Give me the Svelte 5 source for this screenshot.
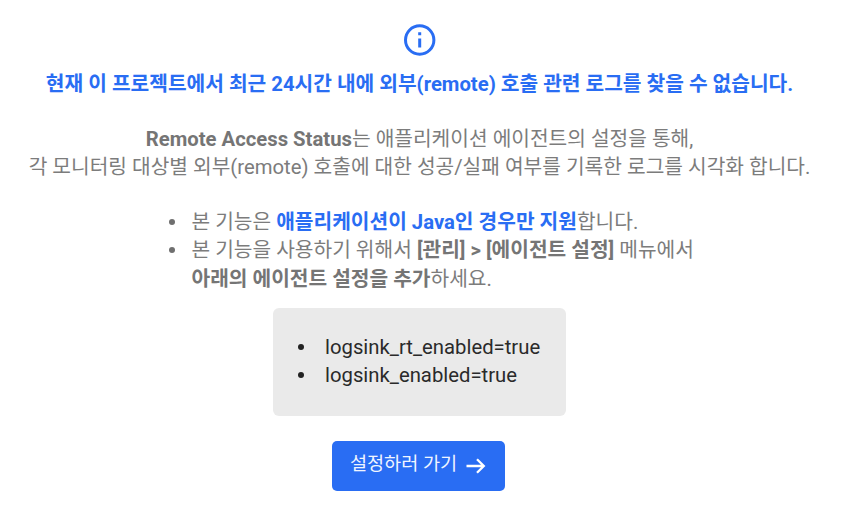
<script>
  const options = ['logsink_rt_enabled=true', 'logsink_enabled=true'];
</script>

<main class="notice">
  <svg class="info" viewBox="0 0 32 32" aria-hidden="true">
    <circle cx="15.7" cy="16" r="14.2" />
    <path d="M15.7 14.5v9M15.7 8.3v3" />
  </svg>

  <h1>현재 이 프로젝트에서 최근 24시간 내에 외부(remote) 호출 관련 로그를 찾을 수 없습니다.</h1>

  <p class="description">
    <span><b>Remote Access Status</b>는 애플리케이션 에이전트의 설정을 통해,</span><br />
    <span>각 모니터링 대상별 외부(remote) 호출에 대한 성공/실패 여부를 기록한 로그를 시각화 합니다.</span>
  </p>

  <ul class="guide">
    <li><span>본 기능은 <b class="accent">애플리케이션이 Java인 경우만 지원</b>합니다.</span></li>
    <li>
      <span>본 기능을 사용하기 위해서 <b>[관리] &gt; [에이전트 설정]</b> 메뉴에서</span>
      <span class="continued"><b>아래의 에이전트 설정을 추가</b>하세요.</span>
    </li>
  </ul>

  <ul class="options">
    {#each options as option}
      <li><span>{option}</span></li>
    {/each}
  </ul>

  <button type="button">
    <span>설정하러 가기</span>
    <svg class="arrow" viewBox="0 0 20 18" aria-hidden="true">
      <path d="M0.5 9h17.3M11 2.2l6.8 6.8-6.8 6.8" />
    </svg>
  </button>
</main>

<style>
  :global(body) {
    margin: 0;
    background: #fff;
  }

  .notice {
    box-sizing: border-box;
    width: 842px;
    height: 522px;
    padding: 24px 4px 0 0;
    display: flex;
    flex-direction: column;
    align-items: center;
    overflow: hidden;
    font: 400 20.3px/28px Roboto, 'Noto Sans CJK KR', sans-serif;
    color: #7c7c7c;
    white-space: nowrap;
  }

  .info {
    width: 32px;
    height: 32px;
    flex: none;
    margin-left: 1px;
    fill: none;
    stroke: #296df3;
    stroke-width: 3;
  }

  h1 {
    margin: 14px 0 0;
    padding-left: 1px;
    font-size: 20.3px;
    line-height: 28px;
    font-weight: 700;
    color: #296df3;
  }

  b {
    font-weight: 700;
    color: #757575;
  }

  .accent {
    color: #296df3;
  }

  .description {
    margin: 27px 0 0;
    padding-left: 1px;
    text-align: center;
  }

  ul {
    margin: 0;
    padding: 0;
    list-style: none;
  }

  li {
    position: relative;
  }

  li::before {
    content: '';
    position: absolute;
    top: 11px;
    left: -23px;
    width: 6px;
    height: 6px;
    border-radius: 50%;
    background: #6f6f6f;
  }

  .guide {
    width: 502px;
    margin: 27px 0 0 47px;
  }

  .continued {
    display: block;
    padding-top: 1px;
  }

  .options {
    box-sizing: border-box;
    width: 293px;
    height: 107.5px;
    margin-top: 15px;
    padding: 25px 0 0 52.5px;
    border-radius: 6px;
    background: #eaeaea;
    color: #2a2a2a;
  }

  .options li::before {
    left: -27px;
    background: #222;
  }

  button {
    width: 173px;
    height: 50px;
    margin: 25.5px 1px 0 0;
    padding: 0;
    display: flex;
    justify-content: center;
    align-items: center;
    gap: 9px;
    border: 0;
    border-radius: 5px;
    background: #296df3;
    color: #f0f5ff;
    font: 400 18.6px/28px Roboto, 'Noto Sans CJK KR', sans-serif;
  }

  button span {
    margin-left: -1px;
    padding-bottom: 4px;
  }

  .arrow {
    width: 20px;
    height: 18px;
    fill: none;
    stroke: #fff;
    stroke-width: 2.3;
  }
</style>
